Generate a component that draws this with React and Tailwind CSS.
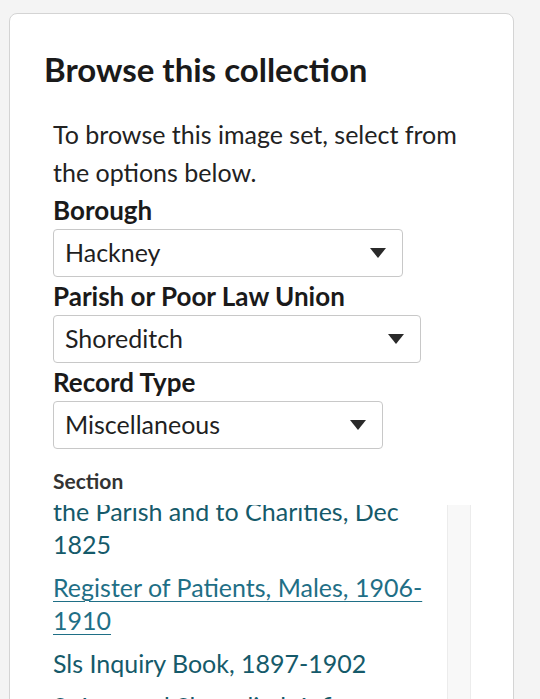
import { useState } from 'react';

const sections = [
    { id: 1, title: ['Register of Payments made by the Churchwardens to the Poor of', 'the Parish and to Charities, Dec 1825'] },
    { id: 2, title: ['Register of Patients, Males, 1906-1910'] },
    { id: 3, title: ['Sls Inquiry Book, 1897-1902'] },
    { id: 4, title: ['St Leonard Shoreditch Infirmary, Register of Deaths'] },
];

function Select({ label, value, width }) {
    return (
        <div>
            <div className="text-[26px] leading-[38px] font-bold text-[#1a1a1a]">{label}</div>
            <div className={`flex items-center justify-between h-[48px] pl-[11px] pr-[16px] border border-[#c8c8c8] rounded-[4px] bg-white ${width}`}>
                <span className="text-[25px] text-[#1f1f1f]">{value}</span>
                <svg width="16" height="10" viewBox="0 0 16 10" className="shrink-0">
                    <path d="M0 0 L16 0 L8 10 Z" fill="#2a2a2a" />
                </svg>
            </div>
        </div>
    );
}

export default function App() {
    const [active] = useState(2);

    return (
        <div className="min-h-[699px] bg-[#f4f4f4] pt-[13px] pl-[9px] pr-[26px] overflow-hidden" style={{ fontFamily: 'Lato, "Noto Sans", sans-serif' }}>
            <div className="bg-white border border-[#d4d4d4] rounded-[8px] h-[720px] pl-[34px] pt-[34px]">
                <h2 className="text-[33px] leading-[42px] font-bold text-[#1a1a1a]">Browse this collection</h2>

                <div className="pl-[9px] mt-[25px]">
                    <p className="text-[25px] leading-[38px] text-[#222] w-[430px]">
                        To browse this image set, select from the options below.
                    </p>

                    <Select label="Borough" value="Hackney" width="w-[350px]" />
                    <Select label="Parish or Poor Law Union" value="Shoreditch" width="w-[368px]" />
                    <Select label="Record Type" value="Miscellaneous" width="w-[330px]" />

                    <div className="text-[21px] leading-[28px] font-bold text-[#333] mt-[18px]">Section</div>

                    <div className="flex w-[418px] h-[200px] mt-[10px] overflow-hidden">
                        <div className="flex-1 overflow-hidden">
                            <ul className="-mt-[76px] pr-[4px] flex flex-col gap-[10px]">
                                {sections.map((s) => (
                                    <li key={s.id} className="text-[25px] leading-[33px]">
                                        <a
                                            href="#"
                                            className={s.id === active ? 'text-[#1f6f86] underline underline-offset-[4px] decoration-[1px]' : 'text-[#155a6a]'}
                                        >
                                            {s.title.map((t, i) => (
                                                <span key={i}>
                                                    {i > 0 && <br />}
                                                    {t}
                                                </span>
                                            ))}
                                        </a>
                                    </li>
                                ))}
                            </ul>
                        </div>
                        <div className="w-[24px] bg-[#f8f8f8] border-l border-r border-[#ececec]" />
                    </div>
                </div>
            </div>
        </div>
    );
}
